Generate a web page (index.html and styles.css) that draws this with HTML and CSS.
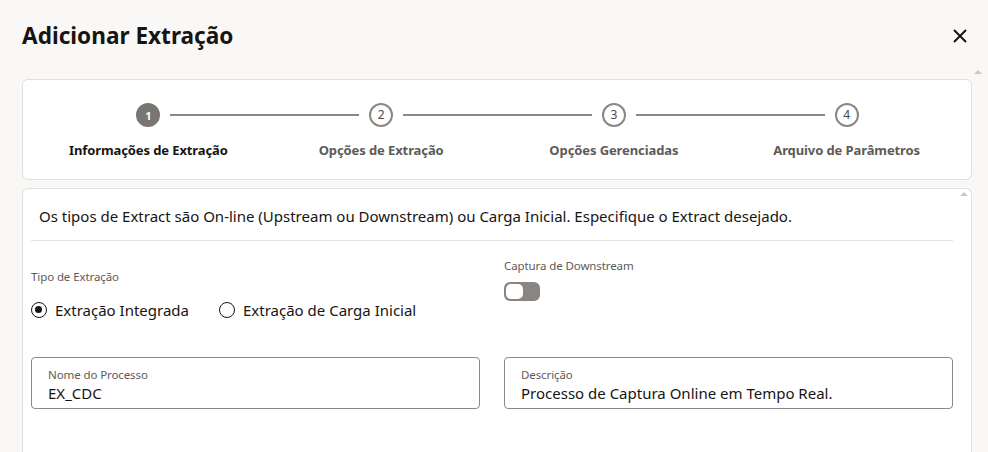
FILE: index.html
```html
<!DOCTYPE html>
<html lang="pt">
<head>
<meta charset="utf-8">
<link rel="stylesheet" href="styles.css">
</head>
<body>
<div class="dialog">
  <header class="dlg-head">
    <h1 class="dlg-title">Adicionar Extração</h1>
    <button class="close" aria-label="Fechar">
      <svg width="16" height="16" viewBox="0 0 16 16"><path d="M2 2 L14 14 M14 2 L2 14" stroke="#161513" stroke-width="2" fill="none"/></svg>
    </button>
  </header>
  <div class="outer-scroll">
    <span class="scroll-arrow outer-arrow"></span>
    <section class="train-card">
      <ol class="train">
        <li class="step done">
          <div class="step-track"><span class="line left hidden"></span><span class="dot active">1</span><span class="line right"></span></div>
          <span class="step-label current">Informações de Extração</span>
        </li>
        <li class="step">
          <div class="step-track"><span class="line left"></span><span class="dot">2</span><span class="line right"></span></div>
          <span class="step-label">Opções de Extração</span>
        </li>
        <li class="step">
          <div class="step-track"><span class="line left"></span><span class="dot">3</span><span class="line right"></span></div>
          <span class="step-label">Opções Gerenciadas</span>
        </li>
        <li class="step">
          <div class="step-track"><span class="line left"></span><span class="dot">4</span><span class="line right hidden"></span></div>
          <span class="step-label">Arquivo de Parâmetros</span>
        </li>
      </ol>
    </section>
    <section class="panel">
      <span class="scroll-arrow inner-arrow"></span>
      <p class="intro">Os tipos de Extract são On-line (Upstream ou Downstream) ou Carga Inicial. Especifique o Extract desejado.</p>
      <div class="grid">
        <div class="field-block type-block">
          <div class="small-label">Tipo de Extração</div>
          <div class="radios">
            <label class="radio"><span class="rdot checked"></span>Extração Integrada</label>
            <label class="radio"><span class="rdot"></span>Extração de Carga Inicial</label>
          </div>
        </div>
        <div class="field-block ds-block">
          <div class="small-label">Captura de Downstream</div>
          <span class="toggle"><span class="knob"></span></span>
        </div>
        <div class="input">
          <span class="in-label">Nome do Processo</span>
          <span class="in-value">EX_CDC</span>
        </div>
        <div class="input">
          <span class="in-label">Descrição</span>
          <span class="in-value">Processo de Captura Online em Tempo Real.</span>
        </div>
      </div>
    </section>
  </div>
</div>
</body>
</html>
```
FILE: styles.css
```css
* { box-sizing: border-box; }
html, body { margin: 0; padding: 0; }
body {
  background: #f9f8f6;
  font-family: "Noto Sans", "Open Sans", sans-serif;
  color: #161513;
  width: 988px;
  height: 452px;
  overflow: hidden;
}
.dialog { padding: 0 0 0 22px; }
.dlg-head {
  display: flex;
  align-items: center;
  justify-content: space-between;
  height: 76px;
  padding-right: 20px;
}
.dlg-title {
  margin: 0;
  font-size: 22.6px;
  font-weight: 700;
  letter-spacing: 0;
  padding-bottom: 6px;
}
.close {
  border: 0;
  background: transparent;
  padding: 0;
  width: 16px;
  height: 16px;
  display: flex;
  margin-bottom: 4px;
}
.outer-scroll { position: relative; padding-right: 16px; padding-top: 3px; }
.scroll-arrow {
  position: absolute;
  width: 0; height: 0;
  border-left: 4px solid transparent;
  border-right: 4px solid transparent;
  border-bottom: 4px solid #c8c8c8;
}
.outer-arrow { right: 6px; top: -6px; }
.inner-arrow { right: 3px; top: 3px; }

.train-card {
  background: #fff;
  border: 1px solid #e1dfdc;
  border-radius: 6px;
  height: 101px;
  padding: 23px 8px 0 9px;
}
.train {
  list-style: none;
  margin: 0; padding: 0;
  display: grid;
  grid-template-columns: repeat(4, 1fr);
}
.step { display: flex; flex-direction: column; align-items: center; }
.step-track { display: flex; align-items: center; width: 100%; height: 24px; }
.line { flex: 1; height: 2px; background: #8a8886; }
.line.left { margin-right: 10px; }
.line.right { margin-left: 10px; }
.line.hidden { visibility: hidden; }
.dot {
  width: 24px; height: 24px;
  border-radius: 50%;
  border: 2px solid #8a8886;
  display: flex; align-items: center; justify-content: center;
  font-size: 12px;
  color: #4a4846;
  line-height: 1;
  flex: none;
}
.dot.active { background: #7a7673; border-color: #7a7673; color: #fff; font-weight: 700; font-size: 11px; }
.step-label {
  margin-top: 14px;
  font-size: 13px;
  font-weight: 700;
  color: #5d5b58;
  white-space: nowrap;
  letter-spacing: -0.1px;
}
.step-label.current { color: #161513; }

.panel {
  position: relative;
  margin-top: 8px;
  background: #fff;
  border: 1px solid #e1dfdc;
  border-bottom: 0;
  border-radius: 6px 6px 0 0;
  height: 270px;
  padding: 0 18px 0 8px;
}
.intro {
  margin: 0;
  padding: 16px 8px 13px;
  font-size: 15px;
  line-height: 22px;
  border-bottom: 1px solid #e4e2df;
  letter-spacing: 0;
}
.grid {
  display: grid;
  grid-template-columns: 1fr 1fr;
  column-gap: 24px;
}
.small-label { font-size: 11.5px; color: #5d5b58; letter-spacing: -0.1px; }
.type-block { padding-top: 28px; }
.ds-block { padding-top: 17px; }
.radios { display: flex; gap: 30px; margin-top: 16px; }
.radio { display: flex; align-items: center; font-size: 15px; letter-spacing: 0; }
.rdot {
  width: 16px; height: 16px;
  border-radius: 50%;
  border: 1.5px solid #161513;
  margin-right: 8px;
  position: relative;
}
.rdot.checked::after {
  content: "";
  position: absolute;
  left: 3px; top: 3px;
  width: 7px; height: 7px;
  border-radius: 50%;
  background: #161513;
}
.toggle {
  display: block;
  margin-top: 9px;
  width: 36px; height: 19px;
  border-radius: 6px;
  background: #8a8581;
  position: relative;
}
.knob {
  position: absolute;
  left: 2px; top: 2px;
  width: 17px; height: 15px;
  border-radius: 5px;
  background: #fff;
}
.input {
  margin-top: 37px;
  height: 52px;
  border: 1px solid #8a8886;
  border-radius: 4px;
  padding: 9px 16px 0;
  display: flex;
  flex-direction: column;
}
.in-label { font-size: 11.5px; color: #5d5b58; line-height: 16px; letter-spacing: -0.1px; }
.in-value { font-size: 15px; line-height: 20px; letter-spacing: 0; }
```
